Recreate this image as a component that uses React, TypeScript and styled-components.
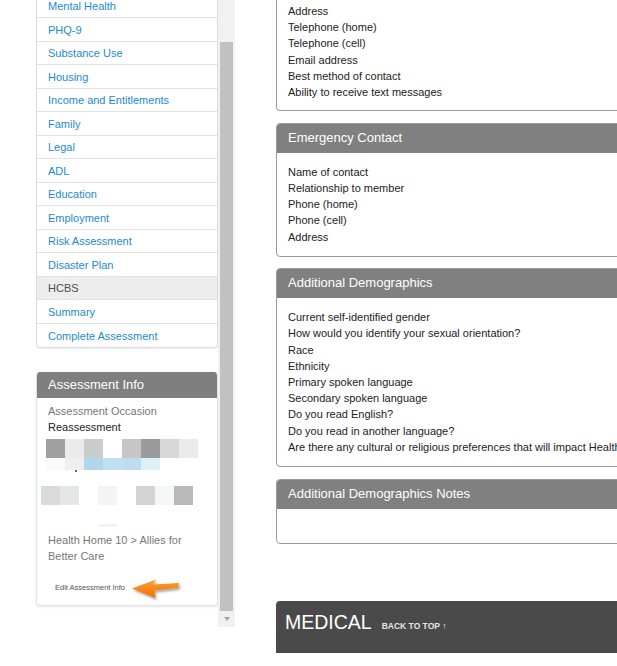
import * as React from 'react'
import styled, { createGlobalStyle } from 'styled-components'

const GlobalStyle = createGlobalStyle`
  html, body {
    margin: 0;
    padding: 0;
    background: #fff;
    overflow: hidden;
  }
  body {
    font-family: 'Liberation Sans', Arial, sans-serif;
    font-size: 11px;
    color: #222;
  }
`

const Page = styled.div`
  display: flex;
  align-items: flex-start;
  width: 617px;
  height: 666px;
  overflow: hidden;
`

const Sidebar = styled.aside`
  display: flex;
  align-items: flex-start;
  margin-left: 36px;
  flex-shrink: 0;
`

const SideContent = styled.div`
  width: 182px;
  display: flex;
  flex-direction: column;
`

const NavCard = styled.ul`
  list-style: none;
  margin: -5.5px 0 0;
  padding: 0;
  background: #fff;
  border: 1px solid #dcdcdc;
  border-top: none;
  border-radius: 0 0 4px 4px;
  box-shadow: 0 1px 2px rgba(0, 0, 0, 0.08);
  overflow: hidden;
`

const NavItem = styled.li<{ $active?: boolean }>`
  box-sizing: border-box;
  height: 23.5px;
  display: flex;
  align-items: center;
  padding: 1px 11px 0;
  border-bottom: 1px solid #e2e2e2;
  background: ${p => (p.$active ? '#ededed' : '#fff')};
  &:last-child {
    border-bottom: none;
  }
`

const NavLink = styled.a<{ $active?: boolean }>`
  color: ${p => (p.$active ? '#4d4d4d' : '#1b8bd0')};
  text-decoration: none;
  font-size: 11px;
`

const InfoCard = styled.section`
  margin-top: 23.5px;
  background: #fff;
  border: 1px solid #e3e3e3;
  border-top: none;
  border-radius: 4px;
  box-shadow: 0 1px 3px rgba(0, 0, 0, 0.1);
  overflow: hidden;
`

const InfoHeader = styled.h3`
  margin: 0;
  height: 26px;
  line-height: 26px;
  padding: 0 11px;
  background: #7f7f7f;
  color: #fff;
  font-size: 13px;
  font-weight: normal;
`

const InfoBody = styled.div`
  padding: 5px 11px 3px;
  line-height: 16px;
`

const InfoLabel = styled.div<{ $strong?: boolean }>`
  color: ${p => (p.$strong ? '#222' : '#777')};
`

const Mosaic = styled.div`
  margin-top: 4px;
  display: flex;
  flex-direction: column;
`

const MosaicRow = styled.div<{ $x: number; $h: number; $top?: number }>`
  display: flex;
  height: ${p => p.$h}px;
  margin-left: ${p => p.$x}px;
  margin-top: ${p => p.$top || 0}px;
`

const Cell = styled.span<{ $c: string; $w?: number }>`
  width: ${p => p.$w || 19}px;
  height: 100%;
  background: ${p => p.$c};
`

const Affiliation = styled.div`
  margin-top: 5px;
  color: #777;
`

const EditRow = styled.div`
  display: flex;
  align-items: center;
  height: 22px;
  margin-top: 14px;
  padding-left: 7px;
  margin-bottom: 2px;
`

const EditLink = styled.a`
  font-size: 7.5px;
  color: #555;
  text-decoration: none;
  margin-top: -2px;
`

const Arrow = styled.svg`
  margin-left: 6px;
  overflow: visible;
`

const Track = styled.div`
  width: 17px;
  height: 627px;
  background: #f1f1f1;
  display: flex;
  flex-direction: column;
  align-items: center;
  flex-shrink: 0;
`

const Thumb = styled.div`
  width: 13px;
  height: 569px;
  margin-top: 42px;
  background: #c1c1c1;
`

const DownArrow = styled.div`
  margin-top: 6px;
  width: 0;
  height: 0;
  border-left: 3.5px solid transparent;
  border-right: 3.5px solid transparent;
  border-top: 4px solid #a3a3a3;
`

const Main = styled.main`
  margin-left: 41px;
  width: 520px;
  flex-shrink: 0;
  display: flex;
  flex-direction: column;
`

const PanelStack = styled.div`
  display: flex;
  flex-direction: column;
  gap: 11.5px;
`

const Panel = styled.section<{ $clipped?: boolean }>`
  background: #fff;
  border: 1px solid #9c9c9c;
  border-radius: 4px;
  overflow: hidden;
  ${p =>
    p.$clipped &&
    `
    border-top: none;
    border-top-left-radius: 0;
    border-top-right-radius: 0;
  `}
`

const PanelHeader = styled.h2`
  margin: 0;
  height: 29px;
  line-height: 28px;
  padding: 0 11px;
  background: #808080;
  color: #fff;
  font-size: 13px;
  font-weight: normal;
`

const PanelBody = styled.div<{ $clipped?: boolean }>`
  padding: ${p => (p.$clipped ? '3px 11px 10px' : '11px')};
  line-height: 16.2px;
  min-height: 12px;
`

const Field = styled.div`
  white-space: nowrap;
`

const Section = styled.div`
  margin-top: 57px;
  height: 52px;
  box-sizing: border-box;
  padding: 9px 9px 0;
  background: #4a4a4a;
  border-radius: 4px 4px 0 0;
  display: flex;
  align-items: baseline;
`

const SectionTitle = styled.h1`
  margin: 0;
  font-size: 19.5px;
  line-height: 24px;
  font-weight: normal;
  color: #fff;
`

const BackToTop = styled.a`
  margin-left: 10px;
  font-size: 8.5px;
  font-weight: bold;
  color: #e6e6e6;
  text-decoration: none;
  text-transform: uppercase;
`

const navItems = [
  'Mental Health',
  'PHQ-9',
  'Substance Use',
  'Housing',
  'Income and Entitlements',
  'Family',
  'Legal',
  'ADL',
  'Education',
  'Employment',
  'Risk Assessment',
  'Disaster Plan',
  'HCBS',
  'Summary',
  'Complete Assessment',
]

const mosaicRows = [
  { x: -2, h: 19, top: 0, cells: ['#a0a0a2', '#eaebeb', '#cbcccc', '#fff', '#c6c6c8', '#9b9b9d', '#d8d8d8', '#ebebeb'] },
  { x: -2, h: 12, top: 0, cells: ['#fafafa', '#efefef', '#b0d8ec', '#c0e0f0', '#bcdcf0', '#e0f0f8'] },
  { x: -7, h: 19, top: 14, cells: ['#d9dbdb', '#e5e7e7', '#fff', '#f4f4f4', '#fff', '#d4d4d4', '#f5f7f7', '#b9b9bb'] },
  { x: 50, h: 3, top: 19, cells: ['#f3f3f3'] },
]

const contactFields = [
  'Address',
  'Telephone (home)',
  'Telephone (cell)',
  'Email address',
  'Best method of contact',
  'Ability to receive text messages',
]

const emergencyFields = ['Name of contact', 'Relationship to member', 'Phone (home)', 'Phone (cell)', 'Address']

const demographicFields = [
  'Current self-identified gender',
  'How would you identify your sexual orientation?',
  'Race',
  'Ethnicity',
  'Primary spoken language',
  'Secondary spoken language',
  'Do you read English?',
  'Do you read in another language?',
  'Are there any cultural or religious preferences that will impact Health Home services?',
]

const OrangeArrow = () => (
  <Arrow width="50" height="22" viewBox="0 0 50 22">
    <defs>
      <linearGradient id="arrowFill" x1="0" y1="0" x2="0" y2="1">
        <stop offset="0" stopColor="#ff9c33" />
        <stop offset="1" stopColor="#f07000" />
      </linearGradient>
      <filter id="arrowShadow" x="-20%" y="-30%" width="150%" height="180%">
        <feDropShadow dx="1.5" dy="2" stdDeviation="1.2" floodColor="#000" floodOpacity="0.35" />
      </filter>
    </defs>
    <path
      d="M1 10.5 L25 1.5 L22 6.5 L48 5 L47 10 L23.5 12.5 L24 20 Z"
      fill="url(#arrowFill)"
      filter="url(#arrowShadow)"
    />
  </Arrow>
)

export default function App() {
  return (
    <>
      <GlobalStyle />
      <Page>
        <Sidebar>
          <SideContent>
            <NavCard>
              {navItems.map(item => (
                <NavItem key={item} $active={item === 'HCBS'}>
                  <NavLink href="#" $active={item === 'HCBS'}>
                    {item}
                  </NavLink>
                </NavItem>
              ))}
            </NavCard>

            <InfoCard>
              <InfoHeader>Assessment Info</InfoHeader>
              <InfoBody>
                <InfoLabel>Assessment Occasion</InfoLabel>
                <InfoLabel $strong>Reassessment</InfoLabel>
                <Mosaic>
                  {mosaicRows.map((row, i) => (
                    <React.Fragment key={i}>
                      <MosaicRow $x={row.x} $h={row.h} $top={row.top}>
                        {row.cells.map((c, j) => (
                          <Cell key={j} $c={c} />
                        ))}
                      </MosaicRow>
                      {i === 1 && (
                        <MosaicRow $x={27} $h={2} $top={0}>
                          <Cell $c="#666" $w={2} />
                        </MosaicRow>
                      )}
                    </React.Fragment>
                  ))}
                </Mosaic>
                <Affiliation>Health Home 10 &gt; Allies for Better Care</Affiliation>
                <EditRow>
                  <EditLink href="#">Edit Assessment Info</EditLink>
                  <OrangeArrow />
                </EditRow>
              </InfoBody>
            </InfoCard>
          </SideContent>

          <Track>
            <Thumb />
            <DownArrow />
          </Track>
        </Sidebar>

        <Main>
          <PanelStack>
            <Panel $clipped>
              <PanelBody $clipped>
                {contactFields.map(f => (
                  <Field key={f}>{f}</Field>
                ))}
              </PanelBody>
            </Panel>

            <Panel>
              <PanelHeader>Emergency Contact</PanelHeader>
              <PanelBody>
                {emergencyFields.map(f => (
                  <Field key={f}>{f}</Field>
                ))}
              </PanelBody>
            </Panel>

            <Panel>
              <PanelHeader>Additional Demographics</PanelHeader>
              <PanelBody>
                {demographicFields.map(f => (
                  <Field key={f}>{f}</Field>
                ))}
              </PanelBody>
            </Panel>

            <Panel>
              <PanelHeader>Additional Demographics Notes</PanelHeader>
              <PanelBody />
            </Panel>
          </PanelStack>

          <Section>
            <SectionTitle>MEDICAL</SectionTitle>
            <BackToTop href="#">Back to top ↑</BackToTop>
          </Section>
        </Main>
      </Page>
    </>
  )
}
